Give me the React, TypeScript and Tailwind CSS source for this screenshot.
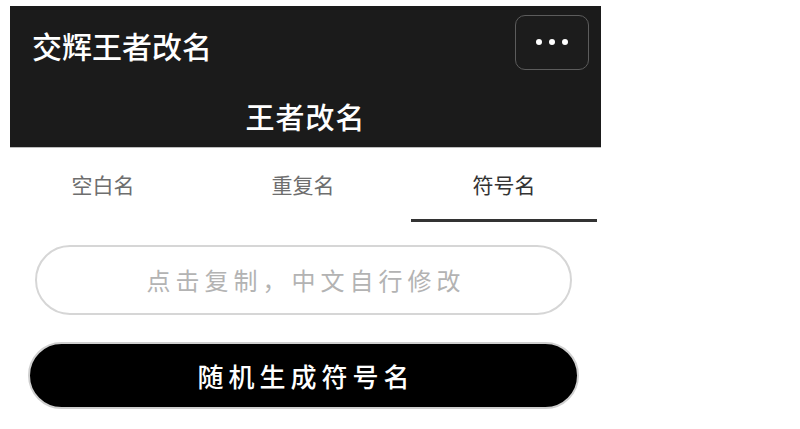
import React from 'react';

const font = { fontFamily: '"Noto Sans CJK SC", "Noto Sans", sans-serif' };

const tabs = ['空白名', '重复名', '符号名'];

export default function App() {
  const active = 2;

  return (
    <div className="w-[800px] h-[429px] bg-white overflow-hidden" style={font}>
      {/* Header */}
      <div className="ml-[10px] mt-[6px] w-[591px] h-[142px] bg-[#1b1b1b] border-b border-[#bdbdbd] flex flex-col">
        <div className="flex items-center justify-between pl-[22px] pr-[12px] pt-[9px] h-[64px]">
          <span className="text-white text-[30px] leading-[30px] mt-[4px] font-medium">交辉王者改名</span>
          <button className="w-[74px] h-[55px] rounded-[10px] border-[1.5px] border-[#5c5c5c] bg-[#1c1c1c] flex items-center justify-center gap-[7px] pb-[1px]">
            <span className="w-[6px] h-[6px] rounded-full bg-white" />
            <span className="w-[6px] h-[6px] rounded-full bg-white" />
            <span className="w-[6px] h-[6px] rounded-full bg-white" />
          </button>
        </div>
        <div className="flex justify-center pt-[31px]">
          <span className="text-white text-[29px] leading-[30px] tracking-[1px] font-medium">王者改名</span>
        </div>
      </div>

      {/* Tabs */}
      <div className="ml-[3px] w-[600px] h-[74px] flex">
        {tabs.map((t, i) => (
          <div key={t} className="w-[200px] h-full flex">
            <div
              className={
                i === active
                  ? 'ml-[8px] mr-[6px] flex-1 flex items-center justify-center border-b-[3px] border-[#333333] text-[#333333] text-[21px] pt-[3px]'
                  : 'flex-1 flex items-center justify-center text-[#6e6e6e] text-[21px]'
              }
            >
              {t}
            </div>
          </div>
        ))}
      </div>

      {/* Input */}
      <div className="ml-[35px] mt-[23px] w-[537px] h-[70px] rounded-full border-2 border-[#d6d6d6] flex items-center justify-center">
        <span className="text-[#b3b3b3] text-[24px] tracking-[5px] pl-[5px]">点击复制，中文自行修改</span>
      </div>

      {/* Button */}
      <button className="ml-[28px] mt-[27px] w-[551px] h-[67px] rounded-full bg-black border-2 border-[#cfcfcf] flex items-center justify-center">
        <span className="text-white text-[26px] tracking-[5px] pl-[5px] font-medium">随机生成符号名</span>
      </button>
    </div>
  );
}
